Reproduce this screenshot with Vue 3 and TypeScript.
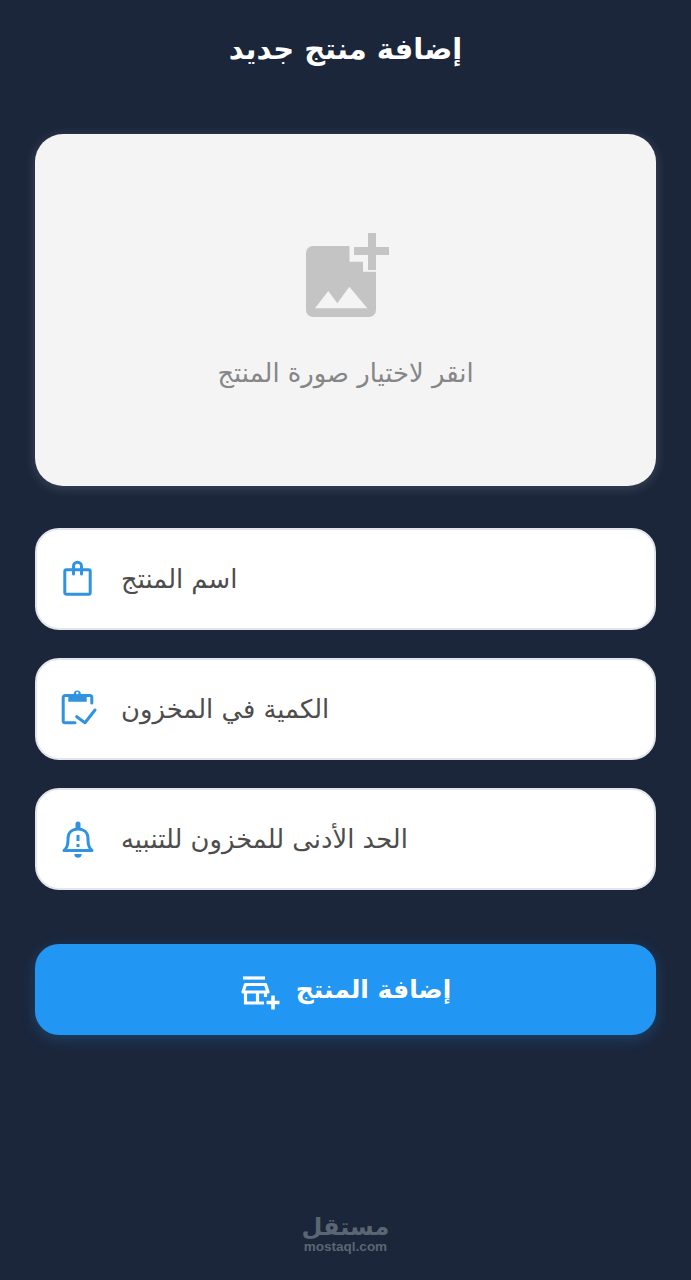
<script setup lang="ts">
const fields = [
  { label: 'اسم المنتج', icon: 'bag' },
  { label: 'الكمية في المخزون', icon: 'stock' },
  { label: 'الحد الأدنى للمخزون للتنبيه', icon: 'bell' }
]
</script>

<template>
  <div class="page">
    <h1 class="title">إضافة منتج جديد</h1>

    <div class="upload">
      <svg class="upload-icon" viewBox="0 0 84 84" width="84" height="84">
        <path fill="#c4c4c4" d="M7 13h36.500v15.700H57v10h13V77a7 7 0 0 1-7 7H7a7 7 0 0 1-7-7V20a7 7 0 0 1 7-7z" />
        <path fill="#f4f4f4" d="M9 75.300L22.300 58l9 12.300 12-16.600 18 21.600z" />
        <path fill="#c4c4c4" d="M62 0h8v14h13v8H70v15h-8V22H48v-8h14z" />
      </svg>
      <p class="upload-text">انقر لاختيار صورة المنتج</p>
    </div>

    <div class="fields">
      <div v-for="field in fields" :key="field.icon" class="field">
        <svg v-if="field.icon === 'bag'" class="field-icon" viewBox="0 0 36 38" fill="none" stroke="#2f93e0" stroke-width="3" stroke-linejoin="round" stroke-linecap="round">
          <rect x="3.800" y="9.800" width="25.400" height="24.400" rx="1.500" />
          <path d="M12.500 14V6.200a4 4 0 0 1 8 0V14" />
        </svg>
        <svg v-else-if="field.icon === 'stock'" class="field-icon" viewBox="0 0 36 38" fill="none" stroke="#2f93e0" stroke-width="3" stroke-linejoin="round" stroke-linecap="round">
          <path d="M14 32.800H4.200a2 2 0 0 1-2-2V7.500a2 2 0 0 1 2-2H28.800a2 2 0 0 1 2 2V13" />
          <path fill="#2f93e0" stroke="none" d="M7.300 4h5.500a3.500 3.500 0 0 1 7 0h5.900v7.700H7.300z" />
          <circle cx="16.300" cy="3" r="1.200" fill="#fff" stroke="none" />
          <path d="M15.700 26.700L24 32.700 34 20" />
        </svg>
        <svg v-else class="field-icon" viewBox="0 0 36 38" fill="none" stroke="#2f93e0" stroke-width="3" stroke-linejoin="round" stroke-linecap="round">
          <path d="M3 30.500H31C28 28 27 25 27 20V18.500C27 12 22.500 9 17 9S7 12 7 18.500V20C7 25 6 28 3 30.500z" />
          <path fill="#2f93e0" stroke="none" d="M14.500 4a2.500 2.500 0 0 1 5 0v5h-5zM13.300 34h7.400a3.700 3.700 0 0 1-7.400 0z" />
          <path stroke-linecap="butt" d="M17 15v6M17 24v3" />
        </svg>
        <span class="field-label">{{ field.label }}</span>
      </div>
    </div>

    <button class="submit" type="button">
      <svg class="submit-icon" viewBox="0 0 38 36" width="38" height="36" fill="none" stroke="#fff" stroke-width="3.200">
        <path d="M3 6h22" />
        <path stroke-linejoin="round" d="M3 20l2.500-7.500h20L28 20z" />
        <path d="M5.500 20v11H24" />
        <path d="M25.500 20v5" />
        <path d="M17.500 20v11" />
        <path stroke-width="3.600" d="M33 23.500v14M26.500 30.500h13" />
      </svg>
      <span>إضافة المنتج</span>
    </button>

    <div class="logo">
      <span class="logo-ar">مستقل</span>
      <span class="logo-en">mostaql.com</span>
    </div>
  </div>
</template>

<style>
body {
  background: #1b263b;
}
</style>

<style scoped>
.page {
  box-sizing: border-box;
  width: 691px;
  height: 1280px;
  padding: 0 35px;
  display: flex;
  flex-direction: column;
  background: #1b263b;
  font-family: "DejaVu Sans", "Noto Sans", sans-serif;
}

.title {
  margin: 0;
  height: 134px;
  padding-top: 29px;
  box-sizing: border-box;
  text-align: center;
  color: #fff;
  font-size: 29px;
  line-height: 40px;
  font-weight: 700;
}

.upload {
  height: 352px;
  border-radius: 28px;
  background: #f4f4f4;
  box-shadow: 0 2px 12px rgba(255, 255, 255, 0.16);
  display: flex;
  flex-direction: column;
  align-items: center;
  padding-top: 99px;
  box-sizing: border-box;
}

.upload-icon {
  margin-left: 5px;
  overflow: visible;
}

.upload-text {
  margin: 37px 0 0;
  color: #868686;
  font-size: 25.800px;
  line-height: 38px;
}

.fields {
  margin-top: 42px;
  display: flex;
  flex-direction: column;
  gap: 28px;
}

.field {
  height: 102px;
  box-sizing: border-box;
  border: 2px solid #e3e5ec;
  border-radius: 24px;
  background: #fff;
  display: flex;
  align-items: center;
  padding-left: 24px;
}

.field-icon {
  width: 36px;
  height: 38px;
  flex: none;
  overflow: visible;
}

.field-label {
  margin-left: 24px;
  color: #4d4d4d;
  font-size: 25.800px;
  line-height: 36px;
}

.submit {
  margin-top: 54px;
  height: 91px;
  border: none;
  border-radius: 24px;
  background: #2196f3;
  box-shadow: 0 4px 14px rgba(33, 150, 243, 0.25);
  color: #fff;
  font-family: inherit;
  font-size: 25px;
  font-weight: 700;
  display: flex;
  align-items: center;
  justify-content: center;
  gap: 18px;
}

.submit-icon {
  overflow: visible;
}

.logo {
  margin-top: auto;
  margin-bottom: 26px;
  display: flex;
  flex-direction: column;
  align-items: center;
  color: #5b6573;
}

.logo-ar {
  font-size: 24px;
  font-weight: 700;
  line-height: 26px;
}

.logo-en {
  font-family: "Liberation Sans", sans-serif;
  font-size: 13.500px;
  font-weight: 700;
  line-height: 14px;
}
</style>
